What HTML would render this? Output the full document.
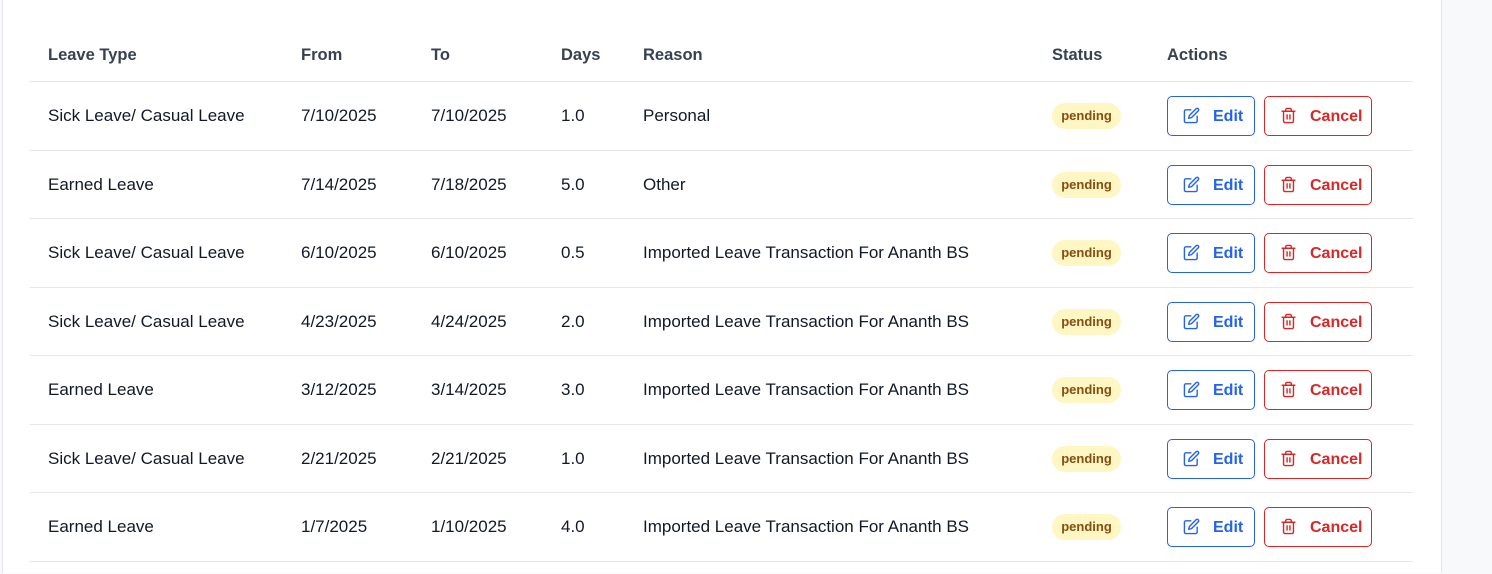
<!DOCTYPE html>
<html style="overflow:hidden;height:574px"><head><style>
body{margin:0;width:1492px;height:574px;background:#f8f9fb;font-family:"Liberation Sans",sans-serif;overflow:hidden;position:relative}
.wrap{position:absolute;left:0;top:0;width:1492px;height:574px;overflow:hidden}
.card{position:absolute;left:2px;top:-12px;width:1438px;height:584px;background:#fff;border:1px solid #e5e7eb;border-bottom:none;border-radius:12px 12px 0 0}
.hl{position:absolute;left:30px;width:1383px;height:1px;background:#e5e7eb}
.t{position:absolute;font-size:17px;color:#111827;white-space:nowrap;line-height:20px}
.h{font-weight:bold;color:#374151;font-size:16.5px}
.badge{position:absolute;left:1052px;width:69px;height:26px;border-radius:13px;background:#fef6c3;color:#854d0e;font-size:13px;font-weight:bold;text-align:center;line-height:26px}
.btn{position:absolute;height:40px;border:1px solid;border-radius:5px;font-size:16px;font-weight:bold;box-sizing:border-box}
.e{left:1167px;width:88px;border-color:#2563eb;color:#2563eb}
.c{left:1264px;width:108px;border-color:#dc2626;color:#dc2626}
.btn svg{position:absolute;left:15px;top:10px}
.btn span{position:absolute;left:45px;top:11px}
</style></head><body>
<div class="wrap">
<div class="card"></div>
<div class="t h" style="left:48px;top:45px">Leave Type</div>
<div class="t h" style="left:301px;top:45px">From</div>
<div class="t h" style="left:431px;top:45px">To</div>
<div class="t h" style="left:561px;top:45px">Days</div>
<div class="t h" style="left:643px;top:45px">Reason</div>
<div class="t h" style="left:1052px;top:45px">Status</div>
<div class="t h" style="left:1167px;top:45px">Actions</div>
<div id="rows"></div>
</div>
<script>
var d=[["Sick Leave/ Casual Leave","7/10/2025","7/10/2025","1.0","Personal"],
["Earned Leave","7/14/2025","7/18/2025","5.0","Other"],
["Sick Leave/ Casual Leave","6/10/2025","6/10/2025","0.5","Imported Leave Transaction For Ananth BS"],
["Sick Leave/ Casual Leave","4/23/2025","4/24/2025","2.0","Imported Leave Transaction For Ananth BS"],
["Earned Leave","3/12/2025","3/14/2025","3.0","Imported Leave Transaction For Ananth BS"],
["Sick Leave/ Casual Leave","2/21/2025","2/21/2025","1.0","Imported Leave Transaction For Ananth BS"],
["Earned Leave","1/7/2025","1/10/2025","4.0","Imported Leave Transaction For Ananth BS"]];
var xs=[48,301,431,561,643],h='<div class="hl" style="top:81px"></div>';
var ed='<svg width="17" height="17" viewBox="0 0 24 24" fill="none" stroke="currentColor" stroke-width="2" stroke-linecap="round" stroke-linejoin="round"><path d="M11 4H4a2 2 0 0 0-2 2v14a2 2 0 0 0 2 2h14a2 2 0 0 0 2-2v-7"/><path d="M18.5 2.5a2.1 2.1 0 0 1 3 3L12 15l-4 1 1-4z"/></svg>';
var tr='<svg width="17" height="17" viewBox="0 0 24 24" fill="none" stroke="currentColor" stroke-width="2" stroke-linecap="round" stroke-linejoin="round"><path d="M3 6h18M19 6v14a2 2 0 0 1-2 2H7a2 2 0 0 1-2-2V6M8 6V4a2 2 0 0 1 2-2h4a2 2 0 0 1 2 2v2M10 11v6M14 11v6"/></svg>';
d.forEach(function(r,i){var y=81+i*68.5;
r.forEach(function(v,j){h+='<div class="t" style="left:'+xs[j]+'px;top:'+(y+25)+'px">'+v+'</div>'});
h+='<div class="badge" style="top:'+(y+22)+'px">pending</div>';
h+='<div class="btn e" style="top:'+(y+15)+'px">'+ed+'<span>Edit</span></div>';
h+='<div class="btn c" style="top:'+(y+15)+'px">'+tr+'<span>Cancel</span></div>';
h+='<div class="hl" style="top:'+(y+68.5)+'px"></div>';});
document.getElementById('rows').innerHTML=h;
</script>
</body></html>
